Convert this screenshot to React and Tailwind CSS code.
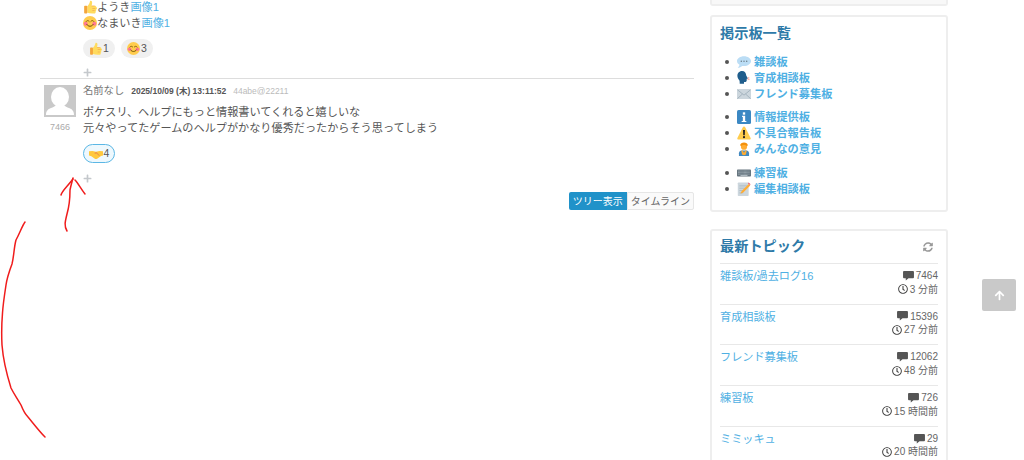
import React from "react";
import { FaPlus, FaRegClock, FaSyncAlt, FaArrowUp } from "react-icons/fa";

const Thumb = ({ s = 14 }) => (
  <svg width={s} height={s} viewBox="0 0 36 36" className="shrink-0">
    <path fill="#FFDB5E" d="M34 18c0-2-1.500-3.500-3.500-3.500H22c1.500-4 2-7.500 1-10.500-1-2.500-4.500-3-5-1-.7 3-1.500 5.500-3 8-1.500 2.500-3 4-4 5v17c4 1 8 2 13 2h5c2 0 3.500-1.500 3.500-3.500 0-.7-.2-1.300-.5-1.800 1.200-.5 2-1.700 2-3 0-.8-.3-1.500-.7-2.100 1.500-.4 2.700-1.900 2.700-3.600 0-.8-.3-1.500-.7-2.100C33.200 19 34 18 34 18z" />
    <rect x="3" y="15" width="8" height="20" rx="2" fill="#F4A63A" />
    <path fill="#EE9547" d="M22 14.500h8v1.500h-8zM24 21h8v1.300h-8zM24 27h6v1.300h-6z" />
  </svg>
);
const Smile = ({ s = 14 }) => (
  <svg width={s} height={s} viewBox="0 0 36 36" className="shrink-0">
    <circle cx="18" cy="18" r="18" fill="#FFCC4D" />
    <circle cx="7" cy="20" r="5" fill="#FF7892" />
    <circle cx="29" cy="20" r="5" fill="#FF7892" />
    <path d="M8 14c1.500-3 6-3 8 0M20 14c2-3 6.500-3 8 0" fill="none" stroke="#664500" strokeWidth="2" strokeLinecap="round" />
    <path d="M10 22c4 6 12 6 16 0" fill="none" stroke="#664500" strokeWidth="2.500" strokeLinecap="round" />
  </svg>
);
const Shake = ({ s = 16 }) => (
  <svg width={s} height={s} viewBox="0 0 36 36" className="shrink-0">
    <path fill="#FFC83D" d="M0 11l9-1 9 2 9-2 9 1v11l-5 1-10 7c-2 1-4 1-6 0L6 24l-6-2z" />
    <path fill="#EE9547" d="M14 15l5-2 9 9-2 1-7-6-4 1z" />
  </svg>
);
const Balloon = () => (
  <svg width="14" height="14" viewBox="0 0 36 36" className="shrink-0">
    <path fill="#BBDDF5" d="M18 3C8 3 0 8.500 0 15.500c0 4 2.500 7.500 6.500 9.800C6 28 4.500 31 2 33c4.500 0 8.500-2 11-4.800 1.600.3 3.300.4 5 .4 10 0 18-5.900 18-13S28 3 18 3z" />
    <circle cx="11" cy="16" r="1.800" fill="#66757F" />
    <circle cx="18" cy="16" r="1.800" fill="#66757F" />
    <circle cx="25" cy="16" r="1.800" fill="#66757F" />
  </svg>
);
const Head = () => (
  <svg width="14" height="14" viewBox="0 0 36 36" className="shrink-0">
    <path fill="#FFB3A7" d="M26 18l5-3 1 2-3 3 4 0v2l-5 2z" />
    <path fill="#1F5D8C" d="M13 0C5 0 1 6 1 13c0 5 3 8 5 11 1 2 1 6 1 9h11v-5h4c2 0 3-2 3-4v-4l3-1-4-7C23 5 20 0 13 0z" />
  </svg>
);
const Mail = () => (
  <svg width="14" height="14" viewBox="0 0 36 36" className="shrink-0">
    <rect y="5" width="36" height="26" rx="3" fill="#CCD6DD" />
    <path d="M1 7l17 14L35 7M1 30l13-12M35 30L22 18" fill="none" stroke="#99AAB5" strokeWidth="2" />
  </svg>
);
const Info = () => (
  <svg width="14" height="14" viewBox="0 0 36 36" className="shrink-0">
    <rect width="36" height="36" rx="4" fill="#3B88C3" />
    <rect x="15" y="6" width="6" height="6" fill="#fff" />
    <path fill="#fff" d="M13 15h8v13h3v3H12v-3h3v-10h-2z" />
  </svg>
);
const Warn = () => (
  <svg width="14" height="14" viewBox="0 0 36 36" className="shrink-0">
    <path fill="#FFCC4D" d="M18 1c-1.500 0-2.500 1-3 2L1 31c-1 2 .5 4 2.500 4h29c2 0 3.500-2 2.500-4L21 3c-.5-1-1.500-2-3-2z" />
    <path fill="#231F20" d="M15.500 10h5L20 24h-4zM18 26a2.800 2.800 0 110 5.600A2.800 2.800 0 0118 26z" />
  </svg>
);
const Person = () => (
  <svg width="14" height="14" viewBox="0 0 36 36" className="shrink-0">
    <path fill="#4289C1" d="M5 36v-7c0-4 3-7 7-7h12c4 0 7 3 7 7v7z" />
    <path fill="#FFAC33" d="M11 22h4l3 6 3-6h4l-2 10-5 2-5-2z" />
    <circle cx="18" cy="12" r="8" fill="#FFAC33" />
    <path fill="#F4900C" d="M8 9c0-5 5-8 10-8s10 3 10 8l-3 1c-3-3-11-3-14 0z" />
  </svg>
);
const Keyboard = () => (
  <svg width="14" height="14" viewBox="0 0 36 36" className="shrink-0">
    <rect y="9" width="36" height="18" rx="2" fill="#66757F" />
    <path d="M3 13h30M3 17h30M3 21h30" stroke="#CCD6DD" strokeWidth="1.500" strokeDasharray="2 1" />
    <rect x="9" y="23" width="18" height="2" fill="#CCD6DD" />
  </svg>
);
const Memo = () => (
  <svg width="14" height="14" viewBox="0 0 36 36" className="shrink-0">
    <rect x="2" y="1" width="28" height="35" rx="2" fill="#CCD6DD" />
    <path d="M6 10h20M6 16h16M6 22h12M6 28h10" stroke="#99AAB5" strokeWidth="1.500" />
    <path fill="#FFAC33" d="M30 5l4 4-18 18-7 3 3-7z" />
    <path fill="#EA596E" d="M30 1l5 5-2 2-5-5z" />
  </svg>
);
const Comment = () => (
  <svg width="11" height="10" viewBox="0 0 12 11" className="shrink-0">
    <path fill="#555" d="M1 0h10a1 1 0 011 1v6a1 1 0 01-1 1H6L3 10.500V8H1a1 1 0 01-1-1V1a1 1 0 011-1z" />
  </svg>
);

const Pill = ({ children, n, active }) => (
  <div className={`flex h-[19px] w-[32px] items-center justify-center gap-[1px] rounded-full text-[10.500px] text-[#555] ${active ? "border border-[#5bb7e5] bg-[#eef8fd]" : "bg-[#f0f0f0]"}`}>
    {children}
    <span>{n}</span>
  </div>
);

const A = ({ children }) => <a className="text-[#4fb0e3]">{children}</a>;

const BoardItem = ({ icon, label }) => (
  <li className="flex h-[16px] items-center">
    <span className="mr-[8px] h-[4px] w-[4px] rounded-full bg-[#555]" />
    <span className="mr-[3px] flex w-[14px] justify-center">{icon}</span>
    <span className="text-[11.200px] font-bold text-[#4fb0e3]">{label}</span>
  </li>
);

const topics = [
  ["雑談板/過去ログ16", "7464", "3 分前"],
  ["育成相談板", "15396", "27 分前"],
  ["フレンド募集板", "12062", "48 分前"],
  ["練習板", "726", "15 時間前"],
  ["ミミッキュ", "29", "20 時間前"],
];

export default function App() {
  return (
    <div
      className="relative flex h-[460px] w-[1024px] overflow-hidden bg-white pl-[40px] text-[11.150px] text-[#555]"
      style={{ fontFamily: '"Liberation Sans", "Noto Sans CJK JP", sans-serif' }}
    >
      <main className="w-[654px] shrink-0">
        <div className="-mt-[1px] pl-[43px]">
          <div className="flex h-[16px] items-center"><Thumb s={14} /><span>ようき</span><A>画像1</A></div>
          <div className="flex h-[16px] items-center"><Smile s={14} /><span>なまいき</span><A>画像1</A></div>
          <div className="mt-[8px] flex gap-[6px]">
            <Pill n="1"><Thumb s={13} /></Pill>
            <Pill n="3"><Smile s={13} /></Pill>
          </div>
          <FaPlus className="mt-[10px] text-[9px] text-[#c4c8cc]" />
        </div>
        <div className="mt-[1px] flex border-t border-[#dddddd] pt-[6px]">
          <div className="ml-[4px] flex w-[32px] shrink-0 flex-col items-center">
            <div className="h-[32px] w-[32px] overflow-hidden bg-[#c9c9c9]">
              <svg viewBox="0 0 32 32" width="32" height="32">
                <ellipse cx="16" cy="12" rx="9" ry="10" fill="#fff" />
                <path fill="#fff" d="M2 30c0-4 2-6 5-7 2-.8 4-1.500 5-3h8c1 1.500 3 2.200 5 3 3 1 5 3 5 7z" />
              </svg>
            </div>
            <span className="mt-[3px] text-[9px] leading-[14px] text-[#aaaaaa]">7466</span>
          </div>
          <div className="ml-[7px] min-w-0 flex-1">
            <div className="-mt-[1px] flex h-[14px] items-center">
              <span className="text-[10.300px] text-[#777]">名前なし</span>
              <span className="ml-[7px] text-[8.500px] font-bold text-[#555]">2025/10/09 (木) 13:11:52</span>
              <span className="ml-[7px] text-[8.500px] text-[#bbbbbb]">44abe@22211</span>
            </div>
            <p className="mt-[6px] leading-[16px]">ポケスリ、ヘルプにもっと情報書いてくれると嬉しいな</p>
            <p className="leading-[16px]">元々やってたゲームのヘルプがかなり優秀だったからそう思ってしまう</p>
            <div className="mt-[8px] flex">
              <Pill n="4" active><Shake s={14} /></Pill>
            </div>
            <FaPlus className="mt-[11px] text-[9px] text-[#c4c8cc]" />
          </div>
        </div>
        <div className="mt-[9px] flex justify-end">
          <div className="flex h-[18px] items-center rounded-l-[2px] bg-[#2092c9] px-[4px] text-[10px] text-white">ツリー表示</div>
          <div className="flex h-[18px] items-center rounded-r-[2px] border border-[#e6e6e6] bg-[#fafafa] px-[3px] text-[10px] text-[#666]">タイムライン</div>
        </div>
      </main>

      <aside className="ml-[16px] flex w-[238px] shrink-0 flex-col">
        <div className="h-[6px] shrink-0 rounded-b-[3px] border-2 border-t-0 border-[#eeeeee] bg-[#f8f8f8]" />
        <section className="mt-[9px] h-[197px] shrink-0 rounded-[3px] border-2 border-[#eeeeee] bg-white px-[8px]">
          <h2 className="mt-[6px] text-[14.200px] leading-[20px] font-bold text-[#2e7aa8]">掲示板一覧</h2>
          <ul className="mt-[11px] pl-[5px]">
            <BoardItem icon={<Balloon />} label="雑談板" />
            <BoardItem icon={<Head />} label="育成相談板" />
            <BoardItem icon={<Mail />} label="フレンド募集板" />
          </ul>
          <ul className="mt-[7px] pl-[5px]">
            <BoardItem icon={<Info />} label="情報提供板" />
            <BoardItem icon={<Warn />} label="不具合報告板" />
            <BoardItem icon={<Person />} label="みんなの意見" />
          </ul>
          <ul className="mt-[8px] pl-[5px]">
            <BoardItem icon={<Keyboard />} label="練習板" />
            <BoardItem icon={<Memo />} label="編集相談板" />
          </ul>
        </section>
        <section className="mt-[17px] shrink-0 rounded-[3px] border-2 border-[#eeeeee] bg-white px-[8px]">
          <div className="flex h-[32px] items-center justify-between">
            <h2 className="text-[14.200px] font-bold text-[#2e7aa8]">最新トピック</h2>
            <FaSyncAlt className="mr-[5px] text-[10px] text-[#999]" />
          </div>
          {topics.map(([name, count, time]) => (
            <div key={name} className="flex h-[40.700px] justify-between border-t-[1.500px] border-[#e8e8e8] pt-[5px]">
              <a className="-mt-[1px] text-[#4fb0e3]">{name}</a>
              <div className="flex flex-col items-end text-[10px] leading-[13.500px] text-[#666]">
                <div className="flex items-center gap-[2px]"><Comment />{count}</div>
                <div className="flex items-center gap-[2px]"><FaRegClock className="text-[10px] text-[#444]" />{time}</div>
              </div>
            </div>
          ))}
        </section>
      </aside>

      <div className="absolute top-[279px] left-[982px] flex h-[32px] w-[34px] items-center justify-center rounded-[2px] bg-[#c9c9c9]">
        <FaArrowUp className="text-[11px] text-white" />
      </div>

      <svg className="pointer-events-none absolute top-0 left-0" width="1024" height="460" fill="none" stroke="#f01c1c" strokeWidth="1.500" strokeLinecap="round" strokeLinejoin="round">
        <path d="M25 222 C22 226 20 233 16 240 C14 247 14 256 12 264 C9 272 7 278 6 285 C4 298 3 305 2.500 313 C1.500 325 1.500 335 2 345 C3 358 6 372 11 388 C14 394 17 398 21 405 C23 410 25 414 28 417 C33 423 40 432 45 437" />
        <path d="M67 231 C64 226 65 222 67 214 C69 207 70 200 70 190 C71 185 72 182 73 178" />
        <path d="M61 195 C62 191 66 188 73 179 M75 180 C78 183 81 189 85 194" />
      </svg>
    </div>
  );
}
